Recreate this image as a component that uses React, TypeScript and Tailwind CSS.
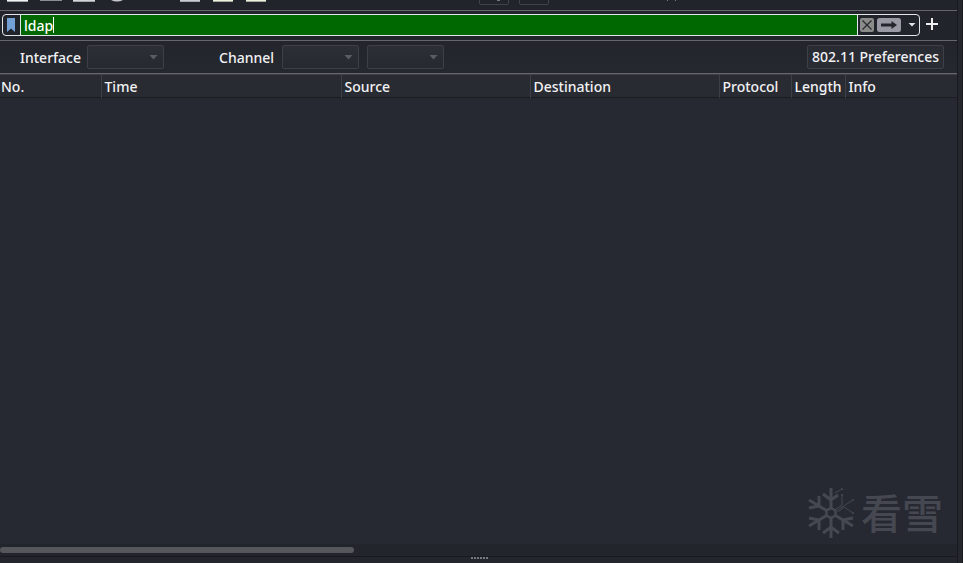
import React from 'react';

const columns = [
  { label: 'No.', width: 'w-[101px]' },
  { label: 'Time', width: 'w-[240px]' },
  { label: 'Source', width: 'w-[189px]' },
  { label: 'Destination', width: 'w-[189px]' },
  { label: 'Protocol', width: 'w-[72px]' },
  { label: 'Length', width: 'w-[54px]' },
  { label: 'Info', width: '' },
];

const Combo = ({ id, label }: { id: string; label?: string }) => (
  <div className="relative h-6 w-[77px]">
    <select
      id={id}
      aria-label={label}
      className="h-6 w-full appearance-none rounded-xs border border-[#3e4047] bg-linear-to-b from-[#2d2f37] to-[#272931]"
    />
    <svg className="pointer-events-none absolute top-2.5 right-1.5" width="9" height="5" viewBox="0 0 9 5" aria-hidden="true">
      <path d="M0.5 0h8l-4 4.5z" fill="#5b5d64" />
    </svg>
  </div>
);

// Lower edge of the main toolbar, its upper part is scrolled out of view
const ToolbarEdge = () => (
  <svg className="block h-2.5 w-[700px]" viewBox="0 0 700 10" aria-hidden="true">
    <path d="M7 0h21v1H7z" fill="#f2f3f4" />
    <path d="M40 0h22v1H40z" fill="#8b8d93" />
    <path d="M73 0h22v1H73z" fill="#d2d5da" />
    <path d="M111 0h12q-6 3-12 0z" fill="#c5c7cc" />
    <path d="M180 0h20v1h-20z" fill="#c8ccd3" />
    <path d="M213 0h20v1h-20zM246 0h20v1h-20z" fill="#eef3d4" />
    <path d="M7 1h21v1H7zM73 1h22v1H73zM180 1h20v1h-20zM213 1h20v1h-20zM246 1h20v1h-20z" fill="#a5a8aa" />
    <path d="M479.5 0v3.5q0 1 1 1h27q1 0 1-1V0M519.5 0v3.5q0 1 1 1h27q1 0 1-1V0" fill="none" stroke="#41434b" />
    <path d="M497 0h3v1h-3zM667 0h1v1h-1zM675 0h1v1h-1z" fill="#777981" />
  </svg>
);

const FilterBar = () => (
  <form className="flex h-[30px] items-start border-b border-[#66646d] pt-[3px] pl-0.5" onSubmit={e => e.preventDefault()}>
    <div className="flex h-[22px] flex-1 items-stretch overflow-hidden rounded-sm border border-[#e3e6e8]">
      <button type="button" aria-label="Filter bookmarks" className="flex w-[18px] items-center border-r border-[#e3e6e8] pl-1">
        <svg width="8" height="14" viewBox="0 0 8 14" aria-hidden="true">
          <path d="M0 0h8v14l-4-3.5L0 14z" fill="#73a0d5" />
        </svg>
      </button>
      <div className="relative flex flex-1">
        <input
          aria-label="Display filter"
          defaultValue="ldap"
          className="w-full min-w-0 bg-[#006800] pt-0.5 pl-[3px] font-medium text-white outline-none"
        />
        <span className="absolute top-0.5 left-8 h-4 w-px bg-white" />
      </div>
      <div className="flex items-center border-l border-[#e3e6e8] pl-0.5">
        <button type="button" aria-label="Clear filter">
          <svg width="14" height="14" viewBox="0 0 14 14" aria-hidden="true">
            <rect width="14" height="14" rx="2" fill="#8b8b89" />
            <path d="M2.5 2.5l9 9M11.5 2.5l-9 9" stroke="#292b33" strokeWidth="1.3" />
          </svg>
        </button>
        <button type="submit" aria-label="Apply filter" className="ml-[3px]">
          <svg width="24" height="14" viewBox="0 0 24 14" aria-hidden="true">
            <rect width="24" height="14" rx="2.5" fill="#9899a2" />
            <path d="M4 5.5h10.5V3L20 7l-5.5 4V8.5H4z" fill="#24262e" />
          </svg>
        </button>
        <button type="button" aria-label="Recent filters" className="mr-[3px] ml-[7px]">
          <svg width="8" height="14" viewBox="0 0 8 14" aria-hidden="true">
            <path d="M0.5 5h7L4 8.5z" fill="#dfe1e4" />
          </svg>
        </button>
      </div>
    </div>
    <button type="button" aria-label="Add filter button" className="mt-1 mr-[19px] ml-1.5">
      <svg width="12" height="12" viewBox="0 0 12 12" aria-hidden="true">
        <path d="M6 0v12M0 6h12" stroke="#eceef0" strokeWidth="2" />
      </svg>
    </button>
  </form>
);

const WirelessBar = () => (
  <div className="flex h-[33px] items-center border-b border-[#66646d] bg-linear-to-b from-[#23252d] to-[#262830] pr-[13px] pl-5">
    <label htmlFor="interface" className="w-[67px] pt-0.5">Interface</label>
    <Combo id="interface" />
    <label htmlFor="channel" className="ml-[55px] w-[63px] pt-0.5">Channel</label>
    <Combo id="channel" />
    <div className="ml-2">
      <Combo id="width" label="Channel width" />
    </div>
    <button type="button" className="ml-auto h-6 rounded-xs border border-[#3e4047] bg-[#2a2c34] px-1 whitespace-nowrap">
      802.11 Preferences
    </button>
  </div>
);

const Watermark = () => (
  <div className="absolute right-3.5 bottom-1 flex items-center gap-1.5 text-[#464851]">
    <svg width="48" height="54" viewBox="0 0 48 54" fill="none" stroke="currentColor" aria-hidden="true">
      <path d="M24 22l4.500 2.500v5L24 32l-4.500-2.500v-5z" strokeWidth="2.5" />
      <g strokeWidth="3">
        <path d="M24 22V2M16 8l8 6M24 14l7-5" />
        <path d="M24 32v20M16 47l8-6 8 6" />
        <path d="M19.500 24.500L2 14M2 22l10-2V10" />
        <path d="M19.500 29.500L2 40M2 32l10 2v10" />
        <path d="M28.500 29.500L46 40M46 32l-10 2v10" />
      </g>
      <path d="M28 7l7-4M35 9v10l-6 4M29 25l17-11M31 26l6-5 9 6" strokeWidth="1" />
      <g fill="currentColor" stroke="none">
        <circle cx="35" cy="3" r="1" />
        <circle cx="35" cy="9" r="1" />
        <circle cx="46" cy="14" r="1" />
        <circle cx="46" cy="27" r="1" />
      </g>
    </svg>
    <span className="pb-1 font-['Noto_Sans_CJK_SC',sans-serif] text-[41px] leading-[50px] font-medium">看雪</span>
  </div>
);

const App: React.FC = () => {
  return (
    <div className="flex min-h-screen bg-[#22242b] font-['Noto_Sans',sans-serif] text-sm leading-5 font-medium text-[#f1f2f4]">
      <main className="flex min-w-0 flex-1 flex-col border-r border-[#181a20]">
        <div className="h-[11px] overflow-hidden border-b border-[#66646d]">
          <ToolbarEdge />
        </div>
        <FilterBar />
        <WirelessBar />

        <section className="relative flex flex-1 flex-col bg-[#272932]">
          <table className="w-full table-fixed border-collapse">
            <thead>
              <tr className="h-[22px] border-t border-b border-t-[#3e4047] border-b-[#1b1d23] bg-[#292b32]">
                {columns.map(col => (
                  <th
                    key={col.label}
                    scope="col"
                    className={`${col.width} border-r border-[#3e4047] p-0 pt-0.5 pl-[3px] text-left font-medium whitespace-nowrap first:pl-px last:border-r-0`}
                  >
                    {col.label}
                  </th>
                ))}
              </tr>
            </thead>
          </table>
          <Watermark />
        </section>

        <div className="h-[13px] border-b border-[#17191e] bg-[#23252c] pt-[3px]">
          <div className="h-1.5 w-[37%] rounded-full bg-[#56575b]" />
        </div>
        <div className="flex h-1.5 justify-center gap-px bg-[#24262d] pl-0.5">
          {[0, 1, 2, 3, 4, 5].map(dot => (
            <span key={dot} className="h-0.5 w-0.5 bg-[#777982]" />
          ))}
        </div>
      </main>
      <div className="w-[5px] border-r border-[#181a20] bg-[#25272f]" />
    </div>
  );
};

export default App;
